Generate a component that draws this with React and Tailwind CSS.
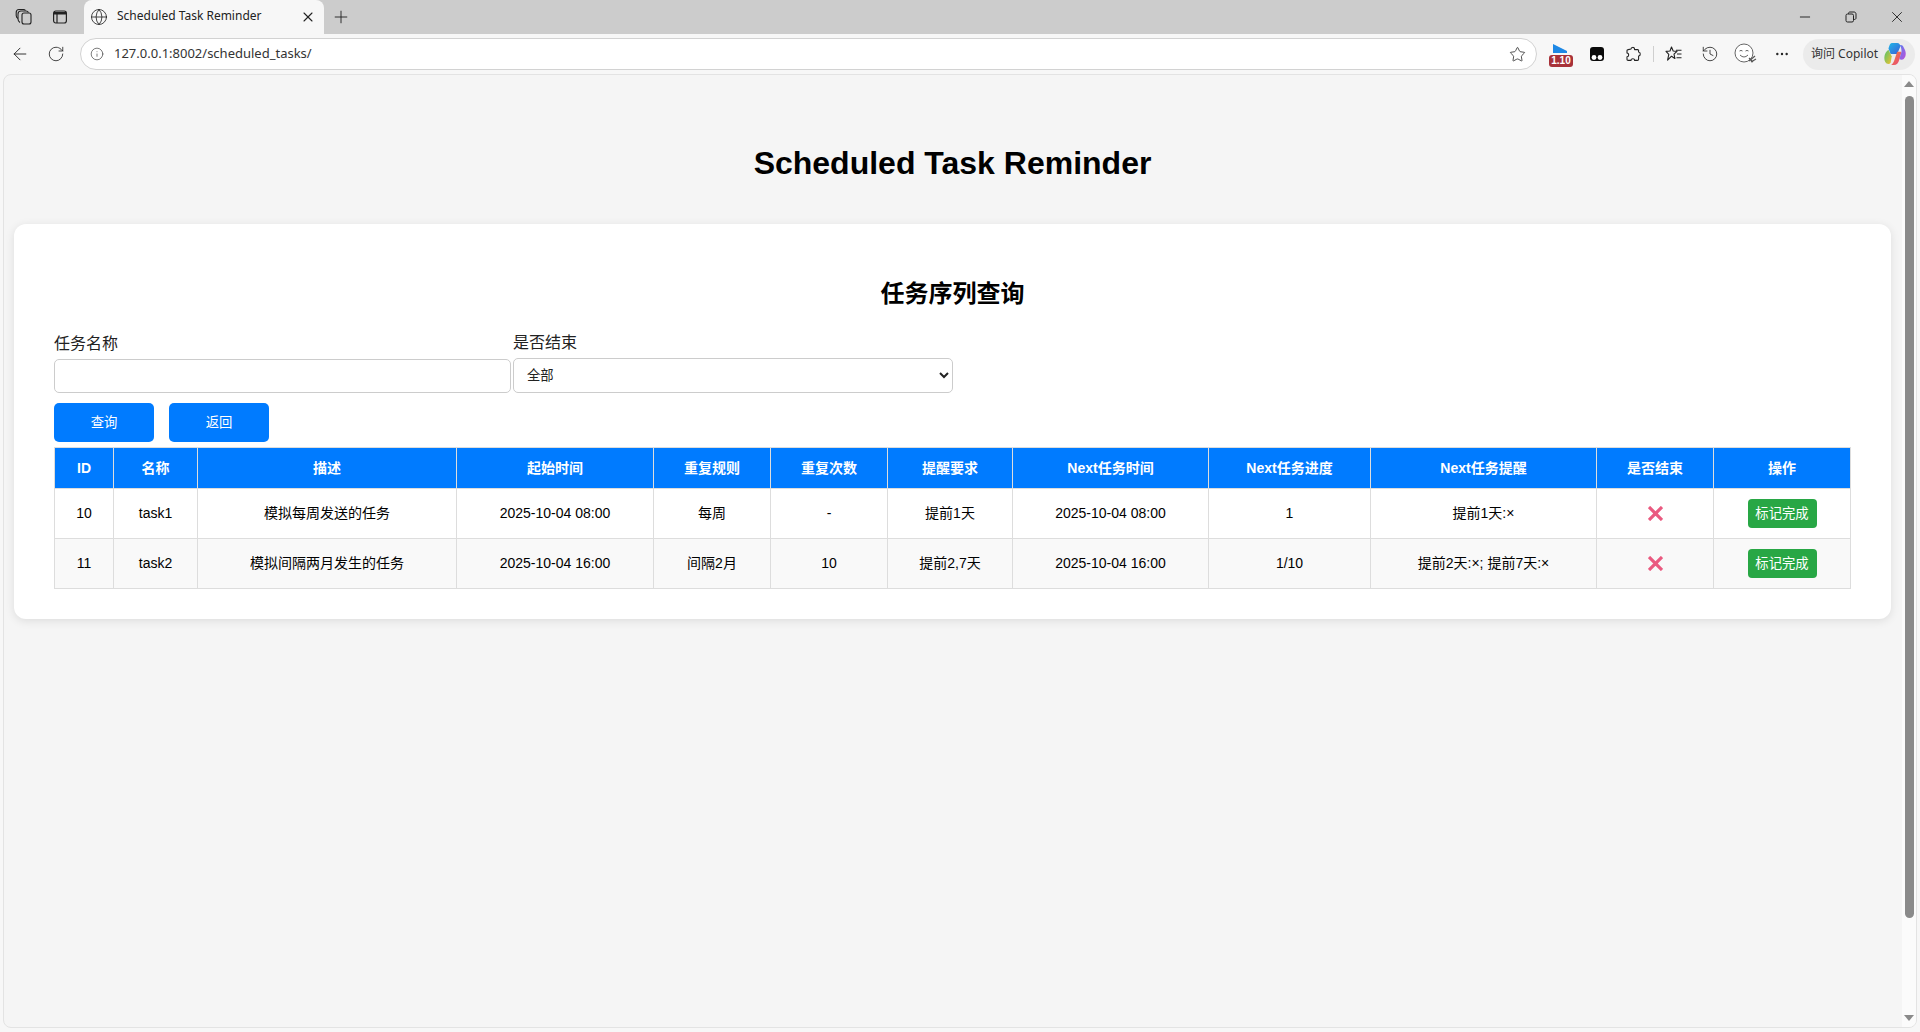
import React from 'react';
import { ArrowLeft, Globe, History, Info, MoreHorizontal, Plus, RotateCw, Star, X, Minus } from 'lucide-react';

const tasks = [
    { id: 10, name: 'task1', desc: '模拟每周发送的任务', start: '2025-10-04 08:00', rule: '每周', times: '-', remind: '提前1天', next: '2025-10-04 08:00', progress: '1', nextRemind: '提前1天:×' },
    { id: 11, name: 'task2', desc: '模拟间隔两月发生的任务', start: '2025-10-04 16:00', rule: '间隔2月', times: '10', remind: '提前2,7天', next: '2025-10-04 16:00', progress: '1/10', nextRemind: '提前2天:×; 提前7天:×' },
];

const headers = ['ID', '名称', '描述', '起始时间', '重复规则', '重复次数', '提醒要求', 'Next任务时间', 'Next任务进度', 'Next任务提醒', '是否结束', '操作'];

// --- browser chrome icons ---
const WorkspacesIcon = () => (
    <svg width="18" height="18" viewBox="0 0 18 18" fill="none" stroke="#222" strokeWidth="1.1">
        <rect x="7" y="5" width="9" height="11" rx="2" />
        <path d="M5 14.5 C3.5 13.5 3 13 3 11 V6 C3 4 4 3 6 3 H11 C12.5 3 13 3.5 13.5 4.5" />
        <path d="M3 10.5 C1.5 9.5 1.2 9 1.2 7.5 V4.5 C1.2 2.5 2.5 1.5 4 1.5 H8.5 C9.5 1.5 10 1.8 10.5 2.5" />
    </svg>
);

const VerticalTabsIcon = () => (
    <svg width="16" height="16" viewBox="0 0 16 16" fill="none" stroke="#222" strokeWidth="1.2">
        <rect x="1.6" y="2" width="12.8" height="12" rx="2.2" />
        <path d="M2 4.2 H14" strokeWidth="2.6" />
        <path d="M5 4 V14" />
    </svg>
);

const RestoreIcon = () => (
    <svg width="12" height="12" viewBox="0 0 12 12" fill="none" stroke="#222" strokeWidth="1">
        <rect x="1" y="3" width="7.5" height="8" rx="1.5" />
        <path d="M3.5 3 V2.5 C3.5 1.5 4 1 5 1 H9 C10.2 1 11 1.8 11 3 V7 C11 8 10.5 8.5 8.5 8.5" />
    </svg>
);

const SpeedBadgeIcon = () => (
    <div className="relative w-[26px] h-[24px] translate-x-[1px]">
        <svg width="16" height="10" viewBox="0 0 16 10" className="absolute left-[4px] top-[2px]">
            <path d="M0 0 L14 7 V9 H0 Z" fill="#1e88e5" />
        </svg>
        <div className="absolute left-0 bottom-[-1px] w-[24px] h-[12px] rounded-[3px] bg-[#a83239] text-white text-[10px] leading-[12px] font-bold text-center font-['Liberation_Sans',sans-serif]">1.10</div>
    </div>
);

const TamperIcon = () => (
    <svg width="16" height="16" viewBox="0 0 16 16">
        <rect x="1" y="1" width="14" height="14" rx="3" fill="#0a0a0a" />
        <circle cx="5" cy="11.5" r="2.4" fill="#fff" />
        <circle cx="11" cy="11.5" r="2.4" fill="#fff" />
    </svg>
);

const PuzzleIcon = () => (
    <svg width="16" height="16" viewBox="0 0 16 16" fill="none" stroke="#222" strokeWidth="1.1" strokeLinejoin="round">
        <path d="M6 3 C6 1 9.5 0.8 9.5 3 L9.6 3.6 L12.6 3.6 C13.4 3.6 13.6 4 13.6 4.6 L13.6 6 C15.8 6 15.8 10 13.6 10 L13.6 13 C13.6 14 13.2 14.4 12.4 14.4 L9.6 14.4 C9.8 12.2 6 12.2 6 14.4 L3.2 14.4 C2.4 14.4 2 14 2 13.2 L2 10.8 C4.2 10.8 4.2 7 2 7 L2 4.6 C2 4 2.4 3.6 3.2 3.6 Z" />
    </svg>
);

const FavoritesIcon = () => (
    <svg width="18" height="18" viewBox="0 0 18 18" fill="none" stroke="#222" strokeWidth="1.1" strokeLinejoin="round">
        <path d="M6.5 2 L8.2 6 L12 6.4 L9 9.2 L9.9 13.5 L6.5 11.2 L2.6 15.2 L3.8 9.4 L1 6.4 L5 6 Z" />
        <path d="M11 5.2 H16.5 M12 9 H16.5 M11.5 12.8 H16.5" />
    </svg>
);

const SmileIcon = () => (
    <svg width="24" height="24" viewBox="0 0 24 24" fill="none" stroke="#555" strokeWidth="0.9">
        <circle cx="10" cy="11" r="9" fill="#fff" />
        <path d="M5.5 9 Q7 7.8 8.5 9 M11.5 9 Q13 7.8 14.5 9" />
        <path d="M6 13 Q10 17 14 13" />
        <path d="M15 19 L21 14 M17 20 L22 17 M15 16 L19 20" strokeWidth="1.2" />
    </svg>
);

const CopilotIcon = () => (
    <svg width="24" height="24" viewBox="0 0 22 22">
        <defs>
            <linearGradient id="cpA" x1="0" y1="0" x2="1" y2="1">
                <stop offset="0" stopColor="#1fb6e8" />
                <stop offset="1" stopColor="#3a5fd8" />
            </linearGradient>
            <linearGradient id="cpB" x1="0" y1="0" x2="1" y2="1">
                <stop offset="0" stopColor="#4fc26b" />
                <stop offset="1" stopColor="#f2c230" />
            </linearGradient>
            <linearGradient id="cpC" x1="0" y1="0" x2="1" y2="1">
                <stop offset="0" stopColor="#f0803c" />
                <stop offset="1" stopColor="#e8457a" />
            </linearGradient>
            <linearGradient id="cpD" x1="0" y1="0" x2="1" y2="1">
                <stop offset="0" stopColor="#5a7df0" />
                <stop offset="1" stopColor="#c04fd8" />
            </linearGradient>
        </defs>
        <path d="M8 1 H13 C15 1 15.5 2.5 16 4 L13 11 H7 L5 6 C6 3 6.5 1 8 1 Z" fill="url(#cpA)" />
        <path d="M5 7 L8 13 L7 19 C5.5 21 3 20 2 18 C0.5 15 1 10 5 7 Z" fill="url(#cpB)" />
        <path d="M13 9 H17 L15 16 C14 19.5 12.5 21 10 21 H7.5 C9.5 20 10 18 11 15 Z" fill="url(#cpC)" />
        <path d="M15.5 3 C17 2.5 18 3 19 5 C21.5 9 21.5 13 19 15.5 C18 16.5 16 16.5 15 15.5 L17 9 C17 6.5 16.5 4.5 15.5 3 Z" fill="url(#cpD)" />
    </svg>
);

const CrossMark = () => (
    <svg width="15" height="15" viewBox="0 0 15 15" className="block mx-auto">
        <path d="M1 1 L14 14 M14 1 L1 14" stroke="#ea5a80" strokeWidth="3.2" />
    </svg>
);

const Slot = ({ children, className = 'w-9' }) => (
    <div className={`${className} h-full flex items-center justify-center shrink-0`}>{children}</div>
);

const App = () => {
    const cellClass = 'border border-[#dddddd] text-center text-[14px] text-black p-0';
    const headClass = 'border border-[#dddddd] bg-[#007bff] text-white text-center text-[14px] font-bold p-0 h-[41px]';

    return (
        <div className="h-screen overflow-hidden flex flex-col bg-[#f7f7f7] font-['Liberation_Sans','Noto_Sans_CJK_SC',sans-serif]">

            {/* Tab strip */}
            <div className="h-[34px] shrink-0 bg-[#cccccc] flex items-center pl-[6px]">
                <Slot><WorkspacesIcon /></Slot>
                <Slot><VerticalTabsIcon /></Slot>
                <div className="ml-[6px] w-[240px] h-full bg-[#f7f7f7] rounded-t-[8px] flex items-center pl-[6px] pr-[7px]">
                    <Globe size={18} strokeWidth={1.1} className="text-[#222]" />
                    <span className="ml-[9px] pb-[2px] flex-1 text-[12px] text-[#222] font-['Noto_Sans',sans-serif]">Scheduled Task Reminder</span>
                    <X size={16} strokeWidth={1.6} className="text-[#222] mr-[1px]" />
                </div>
                <Slot className="w-[34px]"><Plus size={20} strokeWidth={1.1} className="text-[#222]" /></Slot>
                <div className="flex-1" />
                <Slot className="w-[46px]"><Minus size={16} strokeWidth={1.3} className="text-[#111]" /></Slot>
                <Slot className="w-[46px]"><RestoreIcon /></Slot>
                <Slot className="w-[46px]"><X size={18} strokeWidth={1.1} className="text-[#111]" /></Slot>
            </div>

            {/* Address bar */}
            <div className="h-[40px] shrink-0 flex items-center pl-[2px] pr-[5px]">
                <Slot><ArrowLeft size={20} strokeWidth={1.1} className="text-[#222]" /></Slot>
                <Slot><RotateCw size={18} strokeWidth={1.1} className="text-[#222]" /></Slot>
                <div className="ml-[6px] mr-[6px] flex-1 h-[32px] bg-white border border-[#d2d2d2] rounded-full flex items-center pl-[9px] pr-[10px]">
                    <Info size={14} strokeWidth={1.2} className="text-[#444]" />
                    <span className="ml-[10px] flex-1 text-[13px] text-[#333] font-['Noto_Sans',sans-serif]">127.0.0.1:8002/scheduled_tasks/</span>
                    <Star size={17} strokeWidth={1.1} className="text-[#222]" />
                </div>
                <Slot><SpeedBadgeIcon /></Slot>
                <Slot><TamperIcon /></Slot>
                <Slot><PuzzleIcon /></Slot>
                <div className="w-px h-[16px] bg-[#cfcfcf] ml-[2px] mr-[2px]" />
                <Slot><FavoritesIcon /></Slot>
                <Slot><History size={18} strokeWidth={1.1} className="text-[#222]" /></Slot>
                <Slot><SmileIcon /></Slot>
                <Slot><MoreHorizontal size={16} strokeWidth={1.6} className="text-[#222]" /></Slot>
                <div className="ml-[3px] w-[112px] h-[31px] rounded-full bg-[#ebebeb] flex items-center pl-[8px] shrink-0">
                    <span className="text-[12px] text-[#333] whitespace-nowrap font-['Noto_Sans','Noto_Sans_CJK_SC',sans-serif]">询问 Copilot</span>
                    <span className="ml-[5px]"><CopilotIcon /></span>
                </div>
            </div>

            {/* Page viewport */}
            <div className="flex-1 min-h-0 mx-[3px] mb-[4px] flex bg-[#f5f5f5] border border-[#e3e3e3] rounded-[8px] overflow-hidden">
                <main className="flex-1 min-w-0 pl-[10px] pr-[11px] pt-[70px]">
                    <h1 className="text-[32px] leading-[37px] font-bold text-black text-center mb-[42px]">Scheduled Task Reminder</h1>

                    <section className="bg-white rounded-[12px] shadow-[0_2px_10px_rgba(0,0,0,0.1)] px-[40px] pt-[56px] pb-[30px]">
                        <h2 className="text-[24px] leading-[28px] font-bold text-black text-center mb-[26px]">任务序列查询</h2>

                        {/* Filter form */}
                        <div className="flex items-end gap-[2px]">
                            <div className="w-[457px]">
                                <label className="block text-[16px] leading-[18px] text-[#222] mb-[6px]">任务名称</label>
                                <input type="text" className="block w-full h-[34px] bg-white border border-[#cccccc] rounded-[5px] px-[10px]" />
                            </div>
                            <div className="w-[440px]">
                                <label className="block text-[16px] leading-[18px] text-[#222] mb-[6px]">是否结束</label>
                                <select className="block w-full h-[35px] bg-white border border-[#cccccc] rounded-[5px] px-[9px] text-[13.33px] text-[#222]">
                                    <option>全部</option>
                                    <option>是</option>
                                    <option>否</option>
                                </select>
                            </div>
                        </div>

                        <div className="flex gap-[15px] mt-[10px] mb-[5px]">
                            <button className="w-[100px] h-[39px] bg-[#007bff] text-white text-[13.33px] rounded-[5px]">查询</button>
                            <button className="w-[100px] h-[39px] bg-[#007bff] text-white text-[13.33px] rounded-[5px]">返回</button>
                        </div>

                        {/* Task table */}
                        <table className="w-[1796px] table-fixed border-collapse">
                            <colgroup>
                                <col className="w-[59px]" />
                                <col className="w-[84px]" />
                                <col className="w-[259px]" />
                                <col className="w-[197px]" />
                                <col className="w-[117px]" />
                                <col className="w-[117px]" />
                                <col className="w-[125px]" />
                                <col className="w-[196px]" />
                                <col className="w-[162px]" />
                                <col className="w-[226px]" />
                                <col className="w-[117px]" />
                                <col className="w-[137px]" />
                            </colgroup>
                            <thead>
                                <tr>
                                    {headers.map((h) => (
                                        <th key={h} className={headClass}>{h}</th>
                                    ))}
                                </tr>
                            </thead>
                            <tbody>
                                {tasks.map((t, i) => (
                                    <tr key={t.id} className={`h-[50px] ${i % 2 === 1 ? 'bg-[#f9f9f9]' : 'bg-white'}`}>
                                        <td className={cellClass}>{t.id}</td>
                                        <td className={cellClass}>{t.name}</td>
                                        <td className={cellClass}>{t.desc}</td>
                                        <td className={cellClass}>{t.start}</td>
                                        <td className={cellClass}>{t.rule}</td>
                                        <td className={cellClass}>{t.times}</td>
                                        <td className={cellClass}>{t.remind}</td>
                                        <td className={cellClass}>{t.next}</td>
                                        <td className={cellClass}>{t.progress}</td>
                                        <td className={cellClass}>{t.nextRemind}</td>
                                        <td className={cellClass}><CrossMark /></td>
                                        <td className={cellClass}>
                                            <button className="block mx-auto w-[69px] h-[29px] bg-[#28a745] text-white text-[13.33px] rounded-[4px]">标记完成</button>
                                        </td>
                                    </tr>
                                ))}
                            </tbody>
                        </table>
                    </section>
                </main>

                {/* Scrollbar */}
                <div className="w-[14px] shrink-0 bg-[#fbfbfb] flex flex-col items-center py-[6px]">
                    <div className="w-0 h-0 border-x-[5px] border-x-transparent border-b-[6px] border-b-[#8a8a8a]" />
                    <div className="w-[9px] h-[822px] mt-[9px] rounded-full bg-[#8a8a8a]" />
                    <div className="flex-1" />
                    <div className="w-0 h-0 border-x-[5px] border-x-transparent border-t-[6px] border-t-[#8a8a8a]" />
                </div>
            </div>
        </div>
    );
};

export default App;
